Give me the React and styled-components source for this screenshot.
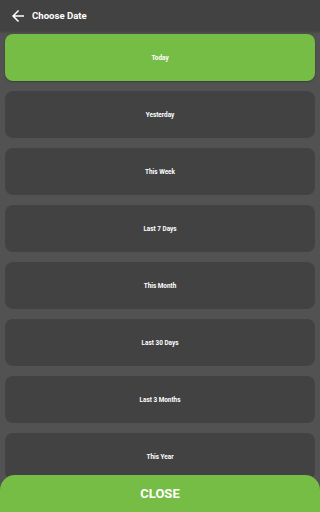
import React from "react";
import styled, { createGlobalStyle } from "styled-components";

const GlobalStyle = createGlobalStyle`
  html, body {
    margin: 0;
    padding: 0;
    background-color: #525252;
    font-family: Roboto, "Liberation Sans", sans-serif;
  }
`;

const options = [
  "Today",
  "Yesterday",
  "This Week",
  "Last 7 Days",
  "This Month",
  "Last 30 Days",
  "Last 3 Months",
  "This Year",
];

function BackArrow() {
  return (
    <svg width="18" height="18" viewBox="0 0 24 24" fill="#ffffff">
      <path d="M20 11H7.83l5.59-5.59L12 4l-8 8 8 8 1.41-1.41L7.83 13H20v-2z" />
    </svg>
  );
}

function App() {
  return (
    <Page>
      <GlobalStyle />
      <Header>
        <BackButton>
          <BackArrow />
        </BackButton>
        <Title>Choose Date</Title>
      </Header>
      <OptionList>
        {options.map((label, i) => (
          <OptionCard key={label} $active={i === 0}>
            <OptionLabel>{label}</OptionLabel>
          </OptionCard>
        ))}
      </OptionList>
      <CloseButton>CLOSE</CloseButton>
    </Page>
  );
}

const Page = styled.div`
  position: relative;
  width: 320px;
  height: 512px;
  overflow: hidden;
  background-color: #525252;
`;

const Header = styled.div`
  display: flex;
  align-items: center;
  gap: 5px;
  height: 31px;
  padding: 0 9px;
  background-color: #424242;
  box-shadow: 0 1px 3px rgba(0, 0, 0, 0.25);
`;

const BackButton = styled.div`
  display: flex;
  align-items: center;
  justify-content: center;
  width: 18px;
  height: 18px;
  margin-top: 1px;
`;

const Title = styled.div`
  color: #ffffff;
  font-size: 9.6px;
  font-weight: 700;
  letter-spacing: 0;
`;

const OptionList = styled.div`
  display: flex;
  flex-direction: column;
  gap: 10px;
  padding: 3px 5px 0;
`;

const OptionCard = styled.div`
  display: flex;
  align-items: center;
  justify-content: center;
  height: 47px;
  border-radius: 8px;
  background-color: ${(p) => (p.$active ? "#76bd45" : "#424242")};
  box-shadow: ${(p) => (p.$active ? "0 1px 2px rgba(0, 0, 0, 0.25)" : "none")};
`;

const OptionLabel = styled.div`
  color: #ffffff;
  font-size: 6.4px;
  font-weight: 700;
  margin-top: 1px;
`;

const CloseButton = styled.div`
  position: absolute;
  left: 0;
  right: 0;
  bottom: 0;
  height: 37px;
  display: flex;
  align-items: center;
  justify-content: center;
  background-color: #76bd45;
  border-radius: 15px 15px 0 0;
  color: #ffffff;
  font-size: 13px;
  font-weight: 700;
`;

export default App;
